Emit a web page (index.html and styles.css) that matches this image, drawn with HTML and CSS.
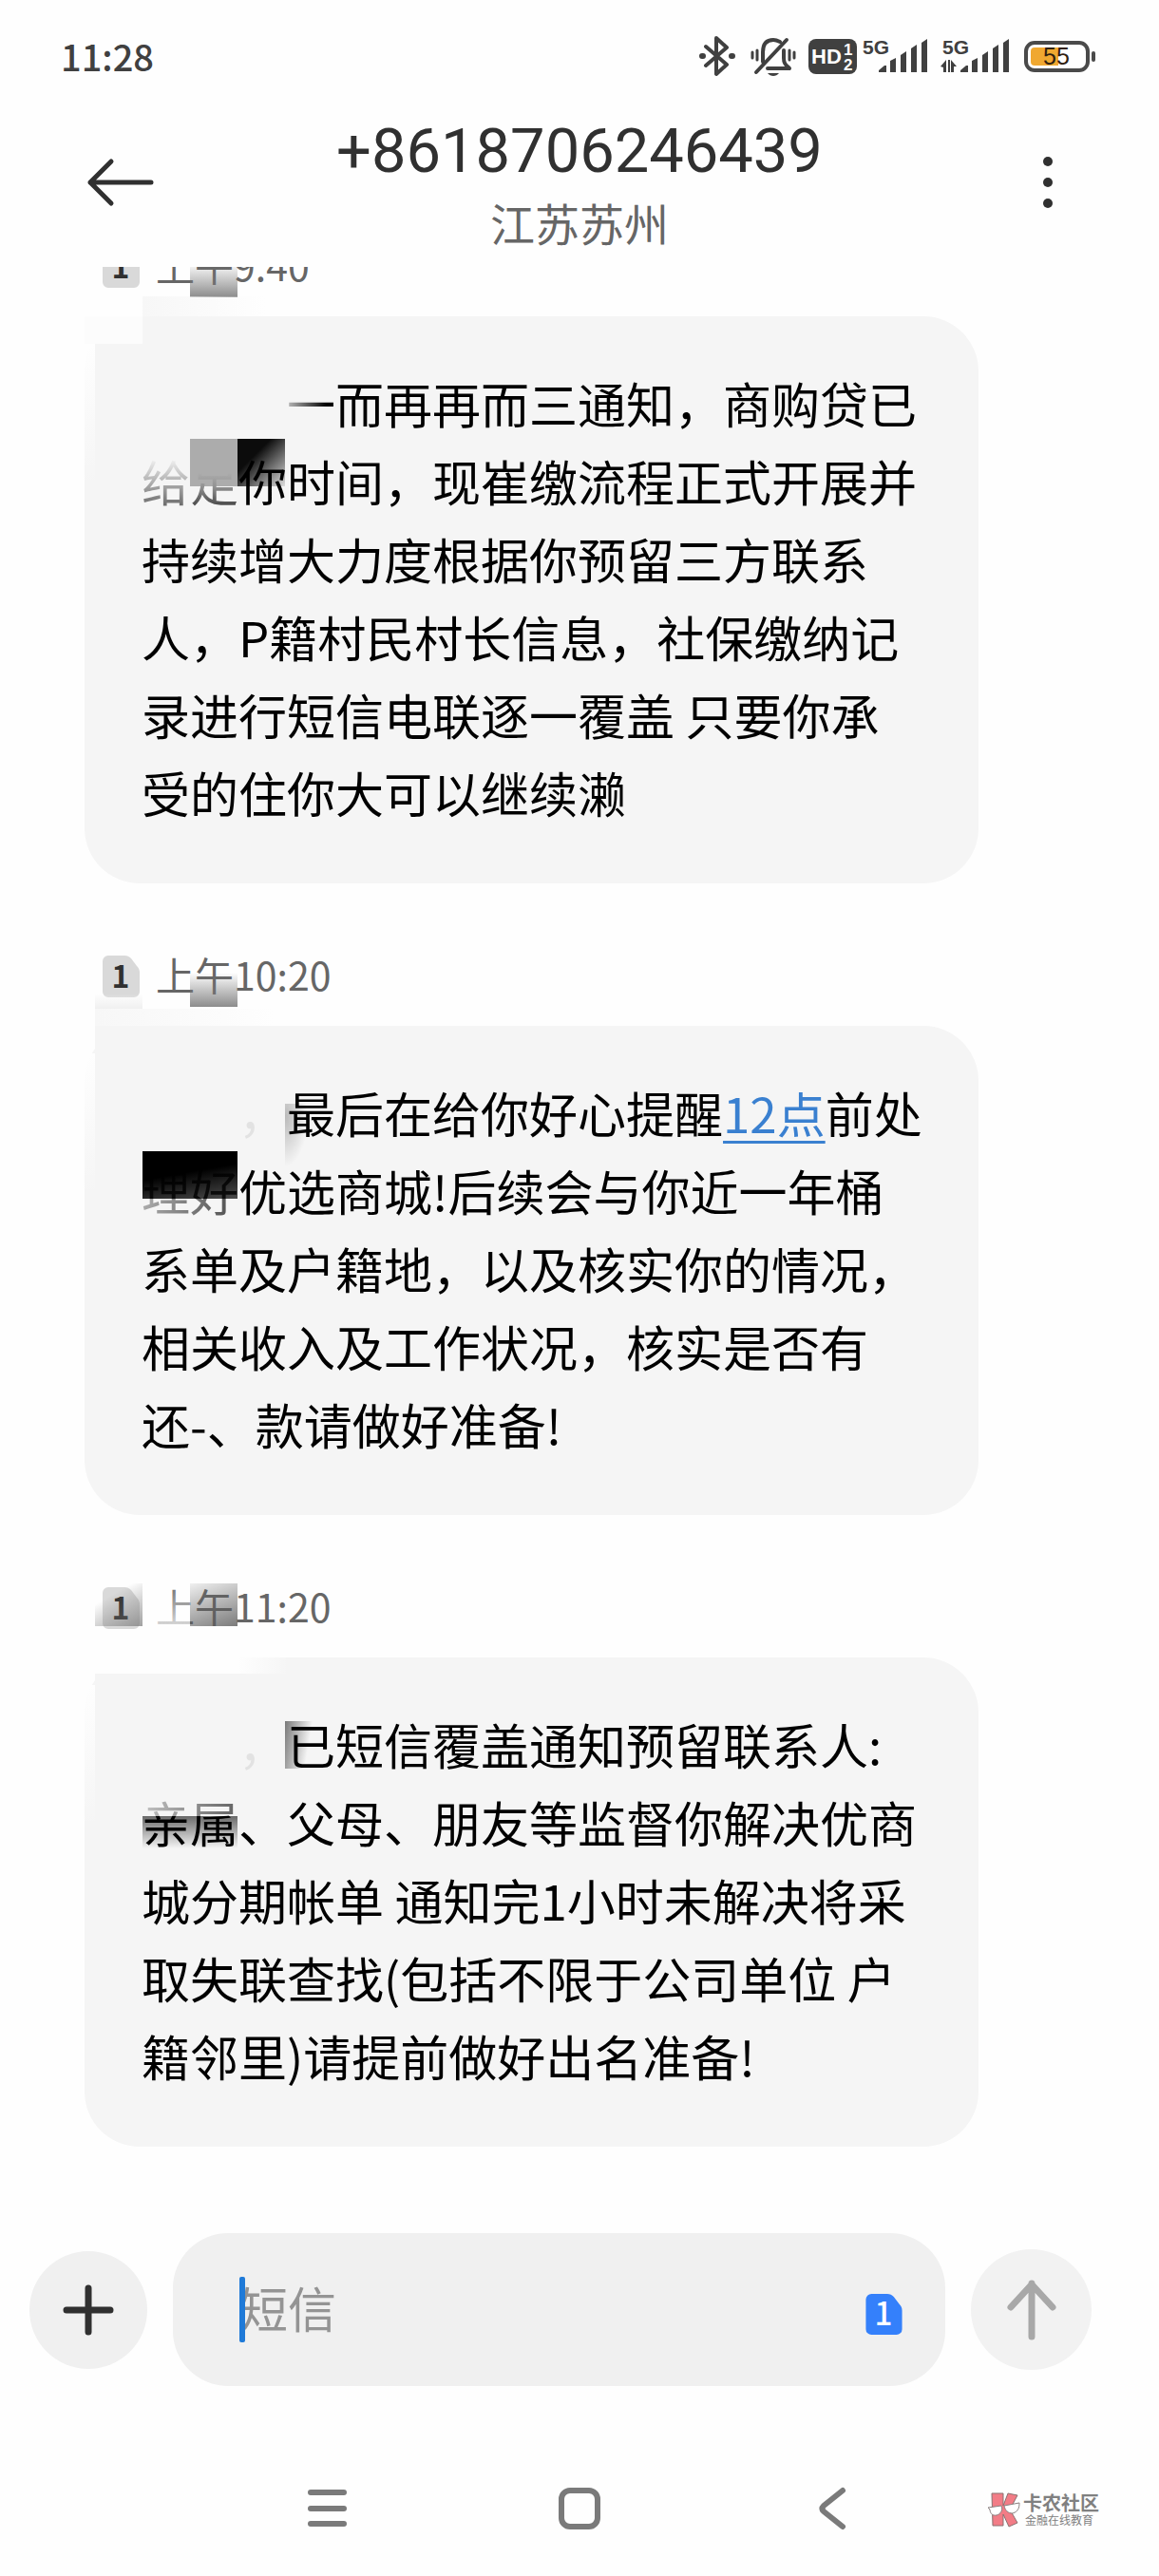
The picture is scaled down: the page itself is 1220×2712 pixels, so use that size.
FILE: index.html
```html
<!DOCTYPE html>
<html lang="zh-CN">
<head>
<meta charset="utf-8">
<meta name="viewport" content="width=device-width, initial-scale=1">
<title>短信</title>
<link rel="stylesheet" href="styles.css">
</head>
<body>
<div class="phone">
	<div class="status">
		<span class="clock">11:28</span>
		<div class="status-icons">
			<svg width="40" height="44" viewBox="0 0 40 44" fill="none" stroke="#404040" stroke-width="4" stroke-linejoin="round" stroke-linecap="round">
				<path d="M8 12L30 31L19 41V3L30 13L8 32"/>
				<path d="M4 22h1M35 22h1" stroke-width="6"/>
			</svg>
			<svg class="bell" width="48" height="44" viewBox="0 0 48 44" fill="none" stroke="#404040" stroke-width="4" stroke-linecap="round" stroke-linejoin="round">
				<path d="M13 28V18C13 9 17 5 24 5C27 5 29 6 31 7M35 16V24C35 30 37 31 41 35H18M6 39L38 5"/>
				<path d="M2 18v6M7 16v10M46 18v6M41 16v10" stroke-width="3"/>
				<path d="M18 40h12c-3 4-9 4-12 0z" fill="#404040" stroke="none"/>
			</svg>
			<svg class="hd" width="51" height="44" viewBox="0 0 51 44">
				<rect x="0" y="4" width="51" height="37" rx="8" fill="#404040"/>
				<text x="3" y="30" font-size="22" font-weight="700" fill="#fff">HD</text>
				<text x="37" y="21" font-size="17" font-weight="700" fill="#fff">1</text>
				<text x="37" y="37" font-size="17" font-weight="700" fill="#fff">2</text>
			</svg>
			<svg width="70" height="44" viewBox="0 0 70 44" fill="#404040">
				<text x="0" y="20" font-size="21" font-weight="700">5G</text>
				<path d="M17 39v-2l6-5h2v7zM29 39V27l6-3v15zM40 39V21l6-4v22zM51 39V14l6-4v29zM62 39V8l6-4v35z"/>
			</svg>
			<svg width="74" height="44" viewBox="0 0 74 44" fill="#404040">
				<text x="2" y="20" font-size="21" font-weight="700">5G</text>
				<path d="M0 33l6-7v13H3v-5zM8 26h2v13H8zM11 26l6 7h-3v6h-3z"/>
				<path d="M21 39v-2l6-5h2v7zM33 39V27l6-3v15zM44 39V21l6-4v22zM55 39V14l6-4v29zM66 39V8l6-4v35z"/>
			</svg>
			<svg class="battery" width="76" height="44" viewBox="0 0 76 44">
				<rect x="2" y="8" width="65" height="29" rx="9" fill="#fff" stroke="#4a4a4a" stroke-width="4"/>
				<path d="M11 13h25v19H11a4 4 0 0 1-4-4V17a4 4 0 0 1 4-4z" fill="#f0a830"/>
				<rect x="71" y="17" width="4" height="11" rx="2" fill="#4a4a4a"/>
				<text x="34" y="31" font-size="25" text-anchor="middle" fill="#302010">55</text>
			</svg>
		</div>
	</div>

	<header class="header">
		<button class="icon-btn" aria-label="返回">
			<svg width="72" height="52" viewBox="0 0 72 52" fill="none" stroke="#303030" stroke-width="5" stroke-linecap="round" stroke-linejoin="round"><path d="M26 4L4 26L26 48M4 26H68"/></svg>
		</button>
		<div class="title">
			<h1>+8618706246439</h1>
			<p>江苏苏州</p>
		</div>
		<button class="icon-btn" aria-label="更多">
			<svg width="72" height="56" viewBox="0 0 72 56" fill="#303030"><circle cx="46" cy="6" r="5"/><circle cx="46" cy="28" r="5"/><circle cx="46" cy="50" r="5"/></svg>
		</button>
	</header>

	<main class="thread">
		<div class="meta">
			<svg class="sim" width="39" height="44" viewBox="0 0 39 44"><path d="M6 0h17c3 0 5 1 7 3l6 8c2 2 3 4 3 7v20a6 6 0 0 1-6 6H6a6 6 0 0 1-6-6V6a6 6 0 0 1 6-6z" fill="#d9d9d9"/><text x="19" y="34" text-anchor="middle" font-size="32" font-weight="700" fill="#303030">1</text></svg>
			<time>上午9:40</time>
			<i class="mosaic time-gray"></i>
		</div>
		<div class="bubble">
			<i class="mosaic bleed"></i>
			<i class="mosaic corner"></i>
			<i class="mosaic edge"></i>
			<i class="mosaic block-gray"></i>
			<i class="mosaic block-dark"></i>
			<p class="text hide-three">一而再再而三通知，商购贷已<br>给足你时间，现崔缴流程正式开展并<br>持续增大力度根据你预留三方联系<br>人，P籍村民村长信息，社保缴纳记<br>录进行短信电联逐一覆盖 只要你承<br>受的住你大可以继续濑</p>
			<i class="mosaic fade-one"></i>
			<i class="mosaic fade-two"></i>
			<i class="mosaic fade-gray"></i>
		</div>

		<div class="meta">
			<svg class="sim" width="39" height="44" viewBox="0 0 39 44"><path d="M6 0h17c3 0 5 1 7 3l6 8c2 2 3 4 3 7v20a6 6 0 0 1-6 6H6a6 6 0 0 1-6-6V6a6 6 0 0 1 6-6z" fill="#d9d9d9"/><text x="19" y="34" text-anchor="middle" font-size="32" font-weight="700" fill="#303030">1</text></svg>
			<time>上午10:20</time>
			<i class="mosaic time-gray"></i>
			<i class="mosaic sim-haze"></i>
		</div>
		<div class="bubble">
			<i class="mosaic bleed wide"></i>
			<i class="mosaic square"></i>
			<i class="mosaic edge"></i>
			<i class="mosaic side-gray"></i>
			<p class="text hide-two"><span class="ghost">，</span>最后在给你好心提醒<a href="#">12点</a>前处<br>理好优选商城!后续会与你近一年桶<br>系单及户籍地，以及核实你的情况，<br>相关收入及工作状况，核实是否有<br>还-、款请做好准备!</p>
			<i class="mosaic cover-black"></i>
			<i class="mosaic fade-below"></i>
		</div>

		<div class="meta">
			<svg class="sim" width="39" height="44" viewBox="0 0 39 44"><path d="M6 0h17c3 0 5 1 7 3l6 8c2 2 3 4 3 7v20a6 6 0 0 1-6 6H6a6 6 0 0 1-6-6V6a6 6 0 0 1 6-6z" fill="#d9d9d9"/><text x="19" y="34" text-anchor="middle" font-size="32" font-weight="700" fill="#303030">1</text></svg>
			<time>上午11:20</time>
			<i class="mosaic time-gray tall"></i>
			<i class="mosaic sim-gray"></i>
			<i class="mosaic time-white"></i>
		</div>
		<div class="bubble">
			<i class="mosaic top-white"></i>
			<i class="mosaic edge"></i>
			<i class="mosaic corner-gray"></i>
			<i class="mosaic line-gray"></i>
			<p class="text hide-two"><span class="ghost">，</span>已短信覆盖通知预留联系人:<br>亲属、父母、朋友等监督你解决优商<br>城分期帐单 通知完1小时未解决将采<br>取失联查找(包括不限于公司单位 户<br>籍邻里)请提前做好出名准备!</p>
			<i class="mosaic fade-above"></i>
		</div>
	</main>

	<form class="composer">
		<button type="button" class="round" aria-label="添加">
			<svg width="54" height="54" viewBox="0 0 54 54" stroke="#303030" stroke-width="7" stroke-linecap="round"><path d="M27 4V50M4 27H50"/></svg>
		</button>
		<div class="field">
			<input type="text" placeholder="短信" aria-label="短信">
			<i class="caret"></i>
			<button type="button" class="sim-btn" aria-label="卡1">
				<svg class="sim" width="39" height="43" viewBox="0 0 39 44"><path d="M6 0h17c3 0 5 1 7 3l6 8c2 2 3 4 3 7v20a6 6 0 0 1-6 6H6a6 6 0 0 1-6-6V6a6 6 0 0 1 6-6z" fill="#3480fb"/><text x="19" y="34" text-anchor="middle" font-size="34" font-weight="500" fill="#fff">1</text></svg>
			</button>
		</div>
		<button type="button" class="round send" aria-label="发送">
			<svg width="54" height="64" viewBox="0 0 54 64" fill="none" stroke="#a8a8a8" stroke-width="7" stroke-linecap="round" stroke-linejoin="round"><path d="M27 60V4M5 29L27 5L49 29"/></svg>
		</button>
	</form>

	<nav class="nav">
		<button aria-label="菜单"><svg width="46" height="46" viewBox="0 0 46 46" stroke="#7a7a7a" stroke-width="6" stroke-linecap="round"><path d="M6 6H41M6 23H41M6 39H41"/></svg></button>
		<button aria-label="主页"><svg width="46" height="46" viewBox="0 0 46 46" fill="none" stroke="#7a7a7a" stroke-width="6"><rect x="4" y="4" width="38" height="38" rx="9"/></svg></button>
		<button aria-label="后退"><svg width="46" height="46" viewBox="0 0 46 46" fill="none" stroke="#7a7a7a" stroke-width="6" stroke-linecap="round" stroke-linejoin="round"><path d="M34 4L14 20Q11 23 14 26L34 42"/></svg></button>
		<div class="brand">
			<svg width="36" height="38" viewBox="0 0 36 38">
				<g fill="#f27c86" stroke="#8a7070" stroke-width="1"><path d="M5 2h12v13l5-13 10 2-8 15 8 14-9 4-6-13v12H6z"/></g>
				<g fill="#fff" stroke="#8a8080" stroke-width="1"><path d="M1 17l14-2c2 5-1 9-5 10-5 1-7-3-7-6zM18 15l16-3c0 5-1 9-7 11-5 0-8-3-9-8z"/></g>
			</svg>
			<div class="brand-text"><b>卡农社区</b><span>金融在线教育</span></div>
		</div>
	</nav>
</div>
</body>
</html>
```
FILE: styles.css
```css
*{
	margin:0;
	padding:0;
	box-sizing:border-box;
}
body{
	background:#fefefe;
	font-family:"Noto Sans CJK SC","Noto Sans",sans-serif;
	color:#000;
}
button{
	border:0;
	background:none;
	font:inherit;
	cursor:pointer;
}
svg{
	display:block;
}
.phone{
	display:flex;
	flex-direction:column;
	height:100vh;
}

/* status bar */
.status{
	display:flex;
	align-items:center;
	justify-content:space-between;
	height:118px;
	padding:0 66px 0 64px;
	flex:none;
}
.clock{
	font-size:38px;
	font-weight:500;
	line-height:48px;
	color:#404040;
}
.status-icons{
	display:flex;
	align-items:center;
}
.status-icons text{
	font-family:"Liberation Sans",sans-serif;
}
.bell{
	margin:0 13px 0 15px;
}
.hd{
	margin-right:6px;
}
.battery{
	margin-left:14px;
}
.status-icons svg + svg:nth-child(5){
	margin-left:12px;
}

/* header */
.header{
	display:flex;
	align-items:flex-start;
	justify-content:space-between;
	padding:0 79px 13px;
	flex:none;
}
.icon-btn{
	display:flex;
	align-items:center;
	justify-content:center;
	width:96px;
	height:148px;
}
.title{
	text-align:center;
}
.title h1{
	font-family:Roboto,"Noto Sans CJK SC",sans-serif;
	font-size:65px;
	font-weight:400;
	line-height:82px;
	color:#303030;
}
.title p{
	font-size:47px;
	line-height:68px;
	color:#666;
}

/* messages, newest at the bottom */
.thread{
	display:flex;
	flex:1;
	flex-direction:column;
	justify-content:flex-end;
	min-height:0;
	padding:0 190px 91px 89px;
	overflow:hidden;
}
.meta{
	position:relative;
	display:flex;
	align-items:flex-start;
	gap:17px;
	height:44px;
	margin:76px 0 30px 19px;
	flex:none;
}
.meta time{
	font-size:41px;
	line-height:38px;
	color:#666;
}
.bubble{
	position:relative;
	flex:none;
	padding:50px 56px 55px 60px;
	border-radius:58px;
	background:#f5f5f5;
}
.text{
	position:relative;
	font-size:51px;
	line-height:82px;
}
.text a{
	color:#3a80d0;
	text-decoration:underline;
	text-decoration-thickness:3px;
	text-underline-offset:8px;
}
.hide-three{
	text-indent:153px;
}
.hide-two{
	text-indent:102px;
}
.ghost{
	color:#e2e2e2;
}

/* smeared squares over the names */
.mosaic{
	position:absolute;
}
.time-gray{
	left:92px;
	top:18px;
	width:50px;
	height:36px;
	background:linear-gradient(to bottom,rgba(120,120,120,0),rgba(120,120,120,.85));
}
.time-gray.tall{
	top:-4px;
	height:45px;
	background:linear-gradient(160deg,rgba(110,110,110,.1),rgba(90,90,90,.8));
}
.sim-haze{
	left:-8px;
	top:40px;
	width:50px;
	height:16px;
	background:linear-gradient(to bottom,rgba(240,240,240,0),#f0f0f0);
}
.sim-gray{
	left:-8px;
	top:-4px;
	width:50px;
	height:45px;
	background:linear-gradient(150deg,rgba(130,130,130,0) 30%,rgba(110,110,110,.65));
}
.time-white{
	left:50px;
	top:0;
	width:42px;
	height:44px;
	background:linear-gradient(to bottom,rgba(254,254,254,.1),rgba(254,254,254,.8));
}
.bleed{
	left:61px;
	top:-21px;
	width:130px;
	height:21px;
	background:linear-gradient(to right,#f7f7f7,rgba(247,247,247,0));
}
.bleed.wide{
	left:11px;
	top:-18px;
	width:190px;
	height:18px;
}
.square{
	left:11px;
	top:0;
	width:60px;
	height:60px;
	background:#f5f5f5;
}
.corner{
	left:0;
	top:0;
	width:61px;
	height:29px;
	background:#fcfcfc;
}
.edge{
	left:0;
	top:29px;
	width:11px;
	height:150px;
	background:linear-gradient(to bottom,#fefefe,rgba(254,254,254,0));
}
.block-gray{
	left:111px;
	top:129px;
	width:50px;
	height:50px;
	background:#acacac;
}
.block-dark{
	left:161px;
	top:129px;
	width:50px;
	height:50px;
	background:linear-gradient(135deg,#0c0c0c 35%,#ddd);
}
.fade-one{
	left:211px;
	top:65px;
	width:44px;
	height:60px;
	background:linear-gradient(to right,rgba(245,245,245,.8),rgba(245,245,245,0));
}
.fade-two{
	left:58px;
	top:143px;
	width:53px;
	height:60px;
	background:linear-gradient(to bottom,#f5f5f5 10%,rgba(245,245,245,.4));
}
.fade-gray{
	left:111px;
	top:129px;
	width:50px;
	height:77px;
	background:linear-gradient(to bottom,#acacac 36px,rgba(172,172,172,.85) 50px,rgba(245,245,245,.6) 50px,rgba(245,245,245,.2));
}
.cover-black{
	left:61px;
	top:132px;
	width:100px;
	height:50px;
	background:linear-gradient(170deg,#000 45%,rgba(20,20,20,.75));
}
.fade-below{
	left:61px;
	top:182px;
	width:100px;
	height:24px;
	background:linear-gradient(100deg,rgba(245,245,245,.7),rgba(245,245,245,.3));
}
.side-gray{
	left:211px;
	top:82px;
	width:24px;
	height:66px;
	background:radial-gradient(farthest-side at 0 20%,rgba(160,160,160,.7),rgba(200,200,200,0));
}
.top-white{
	left:0;
	top:0;
	width:215px;
	height:17px;
	background:linear-gradient(to right,#fefefe 75%,rgba(254,254,254,0));
}
.top-white:after{
	content:"";
	position:absolute;
	left:11px;
	top:17px;
	width:50px;
	height:50px;
	background:#f5f5f5;
}
.corner-gray{
	left:211px;
	top:67px;
	width:50px;
	height:50px;
	background:linear-gradient(100deg,rgba(90,90,90,.8),rgba(200,200,200,0) 50%);
}
.line-gray{
	left:61px;
	top:167px;
	width:100px;
	height:34px;
	background:linear-gradient(to bottom,rgba(70,70,70,.8),rgba(160,160,160,0));
}
.fade-above{
	left:61px;
	top:144px;
	width:100px;
	height:23px;
	background:linear-gradient(100deg,rgba(245,245,245,.8),rgba(245,245,245,.4));
}

/* composer */
.composer{
	display:flex;
	align-items:center;
	gap:27px;
	padding:0 71px 0 31px;
	flex:none;
}
.round{
	display:flex;
	align-items:center;
	justify-content:center;
	width:124px;
	height:124px;
	border-radius:50%;
	background:#f0f0f0;
	flex:none;
}
.send{
	width:127px;
	height:127px;
	background:#f2f2f2;
}
.field{
	position:relative;
	display:flex;
	flex:1;
	align-items:center;
	height:161px;
	padding:0 45px 0 70px;
	border-radius:58px;
	background:#f0f0f0;
}
.field input{
	flex:1;
	min-width:0;
	height:82px;
	padding-bottom:6px;
	border:0;
	outline:0;
	background:none;
	font-family:inherit;
	font-size:51px;
}
.field input::placeholder{
	color:#949494;
	opacity:1;
}
.caret{
	position:absolute;
	left:70px;
	top:46px;
	width:6px;
	height:69px;
	border-radius:2px;
	background:#1f7ad8;
}
.sim-btn{
	padding-top:10px;
}

/* navigation bar */
.nav{
	position:relative;
	display:flex;
	justify-content:center;
	height:200px;
	padding-top:106px;
	flex:none;
}
.nav button{
	display:flex;
	justify-content:center;
	width:266px;
	height:46px;
}
.brand{
	position:absolute;
	right:63px;
	top:111px;
	display:flex;
	align-items:center;
	gap:2px;
	color:#808080;
}
.brand-text{
	display:flex;
	flex-direction:column;
}
.brand-text b{
	font-size:20px;
	line-height:22px;
}
.brand-text span{
	padding-left:2px;
	font-size:12px;
	line-height:14px;
}
```
